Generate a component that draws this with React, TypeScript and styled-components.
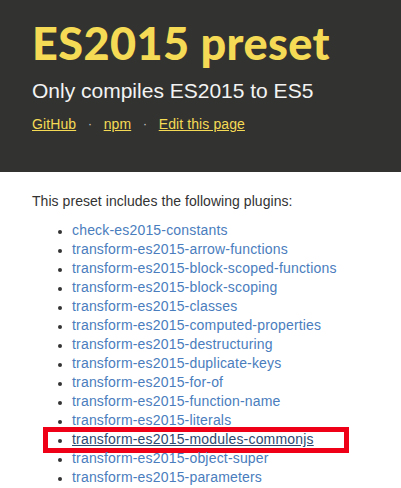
import React from "react";
import styled, { createGlobalStyle } from "styled-components";

const Global = createGlobalStyle`
  html, body { margin: 0; padding: 0; background: #fff; }
  body { font-family: "Liberation Sans", Arial, sans-serif; }
`;

const Header = styled.header`
  background: #323330;
  height: 172px;
  padding: 17px 32px 0;
  box-sizing: border-box;
`;

const Title = styled.h1`
  margin: 0;
  font-family: Lato, "Open Sans", sans-serif;
  font-weight: 900;
  font-size: 45px;
  line-height: 52px;
  color: #f5da55;
  letter-spacing: 0.4px;
`;

const Subtitle = styled.p`
  margin: 9px 0 0;
  font-size: 21px;
  line-height: 26px;
  color: #f3f3f3;
`;

const Links = styled.nav`
  display: flex;
  align-items: center;
  gap: 11.7px;
  margin-top: 11px;
  font-size: 14px;
  line-height: 18px;
  letter-spacing: 0.1px;
`;

const HeaderLink = styled.a`
  color: #f5da55;
  text-decoration: underline;
`;

const Dot = styled.span`
  color: #ccc;
  font-size: 12px;
`;

const Body = styled.main`
  padding: 20px 32px 0;
  color: #333;
`;

const Intro = styled.p`
  margin: 0 0 11px;
  font-size: 14px;
  line-height: 18px;
  letter-spacing: 0.05px;
`;

const List = styled.ul`
  margin: 0;
  padding: 0 0 0 40px;
  font-size: 14px;
  line-height: 19px;
  letter-spacing: 0.18px;
`;

const Item = styled.li<{ $active?: boolean }>`
  position: relative;
  color: #333;
  &::marker { font-size: 12px; }
  ${(p) =>
    p.$active &&
    `
    &::after {
      content: "";
      position: absolute;
      left: -29px;
      top: -3px;
      width: 306px;
      height: 26px;
      box-sizing: border-box;
      border: 5px solid #f00016;
      pointer-events: none;
    }
  `}
`;

const PluginLink = styled.a<{ $active?: boolean }>`
  color: ${(p) => (p.$active ? "#2d4a72" : "#4a7dbd")};
  text-decoration: ${(p) => (p.$active ? "underline" : "none")};
`;

const plugins = [
  "check-es2015-constants",
  "transform-es2015-arrow-functions",
  "transform-es2015-block-scoped-functions",
  "transform-es2015-block-scoping",
  "transform-es2015-classes",
  "transform-es2015-computed-properties",
  "transform-es2015-destructuring",
  "transform-es2015-duplicate-keys",
  "transform-es2015-for-of",
  "transform-es2015-function-name",
  "transform-es2015-literals",
  "transform-es2015-modules-commonjs",
  "transform-es2015-object-super",
  "transform-es2015-parameters",
];

export default function App() {
  return (
    <>
      <Global />
      <Header>
        <Title>ES2015 preset</Title>
        <Subtitle>Only compiles ES2015 to ES5</Subtitle>
        <Links>
          <HeaderLink href="#">GitHub</HeaderLink>
          <Dot>·</Dot>
          <HeaderLink href="#">npm</HeaderLink>
          <Dot>·</Dot>
          <HeaderLink href="#">Edit this page</HeaderLink>
        </Links>
      </Header>
      <Body>
        <Intro>This preset includes the following plugins:</Intro>
        <List>
          {plugins.map((p) => {
            const active = p === "transform-es2015-modules-commonjs";
            return (
              <Item key={p} $active={active}>
                <PluginLink href="#" $active={active}>
                  {p}
                </PluginLink>
              </Item>
            );
          })}
        </List>
      </Body>
    </>
  );
}
